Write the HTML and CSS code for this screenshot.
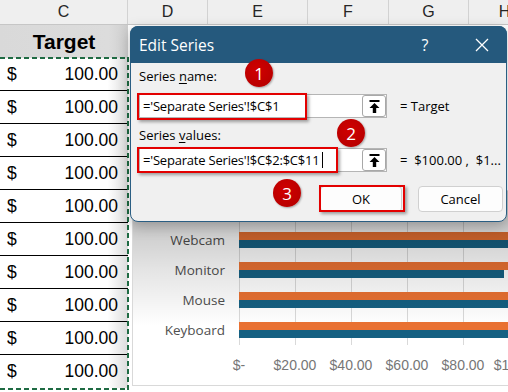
FILE: index.html
```html
<!DOCTYPE html>
<html lang="en">
<head>
    <meta charset="UTF-8">
    <title>Edit Series</title>
    <link rel="stylesheet" href="styles.css">
</head>
<body>
    <div class="sheet">
        <!-- Column headers -->
        <div class="heads">
            <div>C</div>
            <div>D</div>
            <div>E</div>
            <div>F</div>
            <div>G</div>
            <div>H</div>
        </div>

        <div class="rows">
            <!-- Column C -->
            <div class="colc">
                <div class="target">Target</div>
                <div class="range">
                    <div class="cell"><span>$</span><span>100.00</span></div>
                    <div class="cell"><span>$</span><span>100.00</span></div>
                    <div class="cell"><span>$</span><span>100.00</span></div>
                    <div class="cell"><span>$</span><span>100.00</span></div>
                    <div class="cell"><span>$</span><span>100.00</span></div>
                    <div class="cell"><span>$</span><span>100.00</span></div>
                    <div class="cell"><span>$</span><span>100.00</span></div>
                    <div class="cell"><span>$</span><span>100.00</span></div>
                    <div class="cell"><span>$</span><span>100.00</span></div>
                    <div class="cell"><span>$</span><span>100.00</span></div>
                </div>
            </div>

            <!-- Rest of the sheet, with the chart floating on it -->
            <div class="canvas">
                <div class="chart">
                    <div class="plot">
                        <span class="lbl">Webcam</span>
                        <div class="bars"><i class="bar o" style="width:100%"></i><i class="bar b" style="width:100%"></i></div>
                        <span class="lbl">Monitor</span>
                        <div class="bars"><i class="bar o" style="width:100%"></i><i class="bar b" style="width:94.6%"></i></div>
                        <span class="lbl">Mouse</span>
                        <div class="bars"><i class="bar o" style="width:100%"></i><i class="bar b" style="width:100%"></i></div>
                        <span class="lbl">Keyboard</span>
                        <div class="bars"><i class="bar o" style="width:100%"></i><i class="bar b" style="width:100%"></i></div>
                    </div>
                    <div class="axis">
                        <span>$-</span>
                        <span>$20.00</span>
                        <span>$40.00</span>
                        <span>$60.00</span>
                        <span>$80.00</span>
                        <span>$100.00</span>
                    </div>
                </div>
            </div>
        </div>
    </div>

    <!-- Edit Series dialog -->
    <div class="dialog">
        <div class="titlebar">
            <span class="title">Edit Series</span>
            <div class="title-btns">
                <span>?</span>
                <span>
                    <svg width="14" height="14" viewBox="0 0 14 14"><path d="M1 1L13 13M13 1L1 13" stroke="#fff" stroke-width="1.3" fill="none"/></svg>
                </span>
            </div>
        </div>
        <div class="dlg-body">
            <div class="label label-1">Series <u>n</u>ame:</div>
            <div class="field-row row-1">
                <div class="field">
                    <span class="text">='Separate Series'!$C$1</span>
                    <span class="upbtn">
                        <svg width="11" height="13" viewBox="0 0 11 13"><rect x="0.5" y="0" width="10" height="2" fill="#000"/><path d="M5.5 3L0.5 8H3.8V13H7.2V8H10.5Z" fill="#000"/></svg>
                    </span>
                </div>
                <span class="result">= Target</span>
            </div>
            <div class="label label-2">Series <u>v</u>alues:</div>
            <div class="field-row row-2">
                <div class="field">
                    <span class="text">='Separate Series'!$C$2:$C$11<span class="caret"></span></span>
                    <span class="upbtn">
                        <svg width="11" height="13" viewBox="0 0 11 13"><rect x="0.5" y="0" width="10" height="2" fill="#000"/><path d="M5.5 3L0.5 8H3.8V13H7.2V8H10.5Z" fill="#000"/></svg>
                    </span>
                </div>
                <span class="result">=  $100.00 ,  $1...</span>
            </div>
            <div class="actions">
                <button class="ok">OK</button>
                <button>Cancel</button>
            </div>
        </div>

        <!-- Annotations -->
        <div class="mark mark-1"></div>
        <div class="mark mark-2"></div>
        <div class="mark mark-3"></div>
        <span class="badge badge-1">1</span>
        <span class="badge badge-2">2</span>
        <span class="badge badge-3">3</span>
    </div>
</body>
</html>
```

FILE: styles.css
```css
/* Sheet */
body {
    margin: 0;
    width: 508px;
    height: 392px;
    overflow: hidden;
    position: relative;
    background: #fff;
    font-family: "Liberation Sans", Arial, sans-serif;
}
.sheet {
    width: 541px;
}
.heads {
    display: grid;
    grid-template-columns: 128px 80px 100px 81px 80px 72px;
    height: 25px;
    box-sizing: border-box;
    background: #efefef;
    border-bottom: 1px solid #c6c6c6;
}
.heads div {
    display: flex;
    align-items: center;
    justify-content: center;
    border-right: 1px solid #d2d2d2;
    font-size: 16px;
    color: #262626;
}
.rows {
    display: flex;
}
.colc {
    width: 128px;
    flex: none;
}
.target {
    height: 33px;
    display: flex;
    align-items: center;
    justify-content: center;
    background: linear-gradient(90deg, #d9d9d9, #dcdcdc 85%, #cfcfcf);
    font-size: 21px;
    font-weight: bold;
    color: #000;
}
.range {
    position: relative;
}
.range::after {
    content: "";
    position: absolute;
    top: -1px;
    left: 0;
    right: -1px;
    bottom: -2px;
    background:
        repeating-linear-gradient(90deg, #1f6b43 0 5px, transparent 5px 8px) top / 100% 2px no-repeat,
        repeating-linear-gradient(90deg, #1f6b43 0 5px, transparent 5px 8px) bottom / 100% 2px no-repeat,
        repeating-linear-gradient(180deg, #1f6b43 0 5px, transparent 5px 8px) right / 2px 100% no-repeat;
}
.cell {
    height: 33px;
    box-sizing: border-box;
    border-bottom: 1px solid #000;
    display: flex;
    align-items: center;
    justify-content: space-between;
    padding: 0 10px 0 7px;
    font-size: 17.5px;
    color: #000;
    background: linear-gradient(90deg, #fff, #fff 84%, #dcdcdc);
}
.cell:last-child {
    border-bottom: none;
}
.canvas {
    flex: 1;
    position: relative;
    height: 367px;
}

/* Chart */
.chart {
    position: absolute;
    left: 4px;
    top: 165px;
    width: 420px;
    border: 1px solid #d9d9d9;
    background: #fff;
    font-family: "Open Sans", sans-serif;
}
.chart::after {
    content: "";
    position: absolute;
    inset: 0;
    background: linear-gradient(180deg, rgba(0,0,0,.24) 0, rgba(0,0,0,.22) 32px, rgba(0,0,0,.11) 77px, rgba(0,0,0,0) 135px);
    pointer-events: none;
}
.plot {
    display: grid;
    grid-template-columns: 106px 290px;
    grid-auto-rows: 30px;
    padding-top: 34px;
    background: repeating-linear-gradient(90deg, #d9d9d9 0 1px, transparent 1px 56px) 106px 0 / 300px 100% no-repeat;
}
.lbl {
    display: flex;
    align-items: center;
    justify-content: flex-end;
    padding-right: 14px;
    font-size: 13.5px;
    color: #4f4f4f;
}
.bars {
    width: 280px;
    padding-top: 7px;
}
.bar {
    display: block;
    height: 8px;
}
.bar.o {
    background: #e97132;
}
.bar.b {
    background: #156082;
}
.axis {
    display: flex;
    height: 40px;
    align-items: center;
    padding-left: 78px;
    font-family: "Liberation Sans", Arial, sans-serif;
    font-size: 14px;
    color: #767676;
}
.axis span {
    width: 56px;
    flex: none;
    text-align: center;
}

/* Dialog */
.dialog {
    position: absolute;
    left: 130px;
    top: 26px;
    width: 377px;
    height: 196px;
    box-sizing: border-box;
    background: #f0f0f0;
    border: 1px solid #2a5e83;
    border-radius: 8px;
    box-shadow: 0 4px 14px rgba(0, 0, 0, 0.25);
    font-family: "Open Sans", sans-serif;
    font-size: 13px;
    color: #000;
}
.titlebar {
    height: 37px;
    margin: -1px -1px 0;
    display: flex;
    align-items: center;
    background: #25597d;
    border-radius: 8px 8px 0 0;
    color: #fff;
}
.title {
    padding-left: 9px;
    font-size: 15.5px;
}
.title-btns {
    margin-left: auto;
    display: flex;
    gap: 7px;
}
.title-btns span {
    width: 50px;
    display: flex;
    justify-content: center;
    align-items: center;
    font-size: 16px;
}
.dlg-body {
    padding: 0 3px 0 8px;
}
.label {
    line-height: 18px;
}
.label u {
    text-underline-offset: 2px;
}
.label-1 {
    margin-top: 4px;
}
.label-2 {
    margin-top: 8px;
}
.field-row {
    display: flex;
    align-items: center;
}
.row-1 {
    margin-top: 9px;
}
.row-2 {
    margin-top: 4px;
}
.field {
    width: 248px;
    height: 24px;
    box-sizing: border-box;
    display: flex;
    align-items: center;
    background: #fff;
    border: 1px solid #b5b5b5;
}
.field .text {
    flex: 1;
    padding-left: 3px;
    white-space: nowrap;
    letter-spacing: -0.2px;
}
.caret {
    display: inline-block;
    width: 1px;
    height: 16px;
    margin-left: 2px;
    background: #000;
    vertical-align: -3px;
}
.upbtn {
    width: 24px;
    height: 22px;
    box-sizing: border-box;
    display: flex;
    align-items: center;
    justify-content: center;
    border: 1px solid #a8a8a8;
    border-radius: 3px;
    background: #fff;
}
.result {
    margin-left: 13px;
    white-space: pre;
}
.actions {
    display: flex;
    justify-content: flex-end;
    gap: 16px;
    margin-top: 14px;
}
.actions button {
    height: 26px;
    width: 85px;
    background: #fdfdfd;
    border: 1px solid #d0d0d0;
    border-radius: 4px;
    font-family: "Open Sans", sans-serif;
    font-size: 13px;
    color: #000;
}
.actions .ok {
    width: 82px;
}

/* Annotations */
.mark {
    position: absolute;
    box-sizing: border-box;
    border: 2px solid #e30000;
    box-shadow: 2px 2px 3px rgba(0, 0, 0, 0.35);
}
.mark-1 {
    left: 6px;
    top: 66px;
    width: 170px;
    height: 27px;
}
.mark-2 {
    left: 6px;
    top: 120px;
    width: 201px;
    height: 26px;
}
.mark-3 {
    left: 188px;
    top: 158px;
    width: 86px;
    height: 27px;
}
.badge {
    position: absolute;
    width: 28px;
    height: 28px;
    border-radius: 50%;
    display: flex;
    align-items: center;
    justify-content: center;
    background: radial-gradient(circle at 45% 40%, #d10000, #b00000);
    box-shadow: 1px 1px 2px rgba(0, 0, 0, 0.3);
    color: #fff;
    font-size: 17px;
}
.badge-1 {
    left: 114px;
    top: 32px;
}
.badge-2 {
    left: 206px;
    top: 92px;
}
.badge-3 {
    left: 142px;
    top: 152px;
}
```
